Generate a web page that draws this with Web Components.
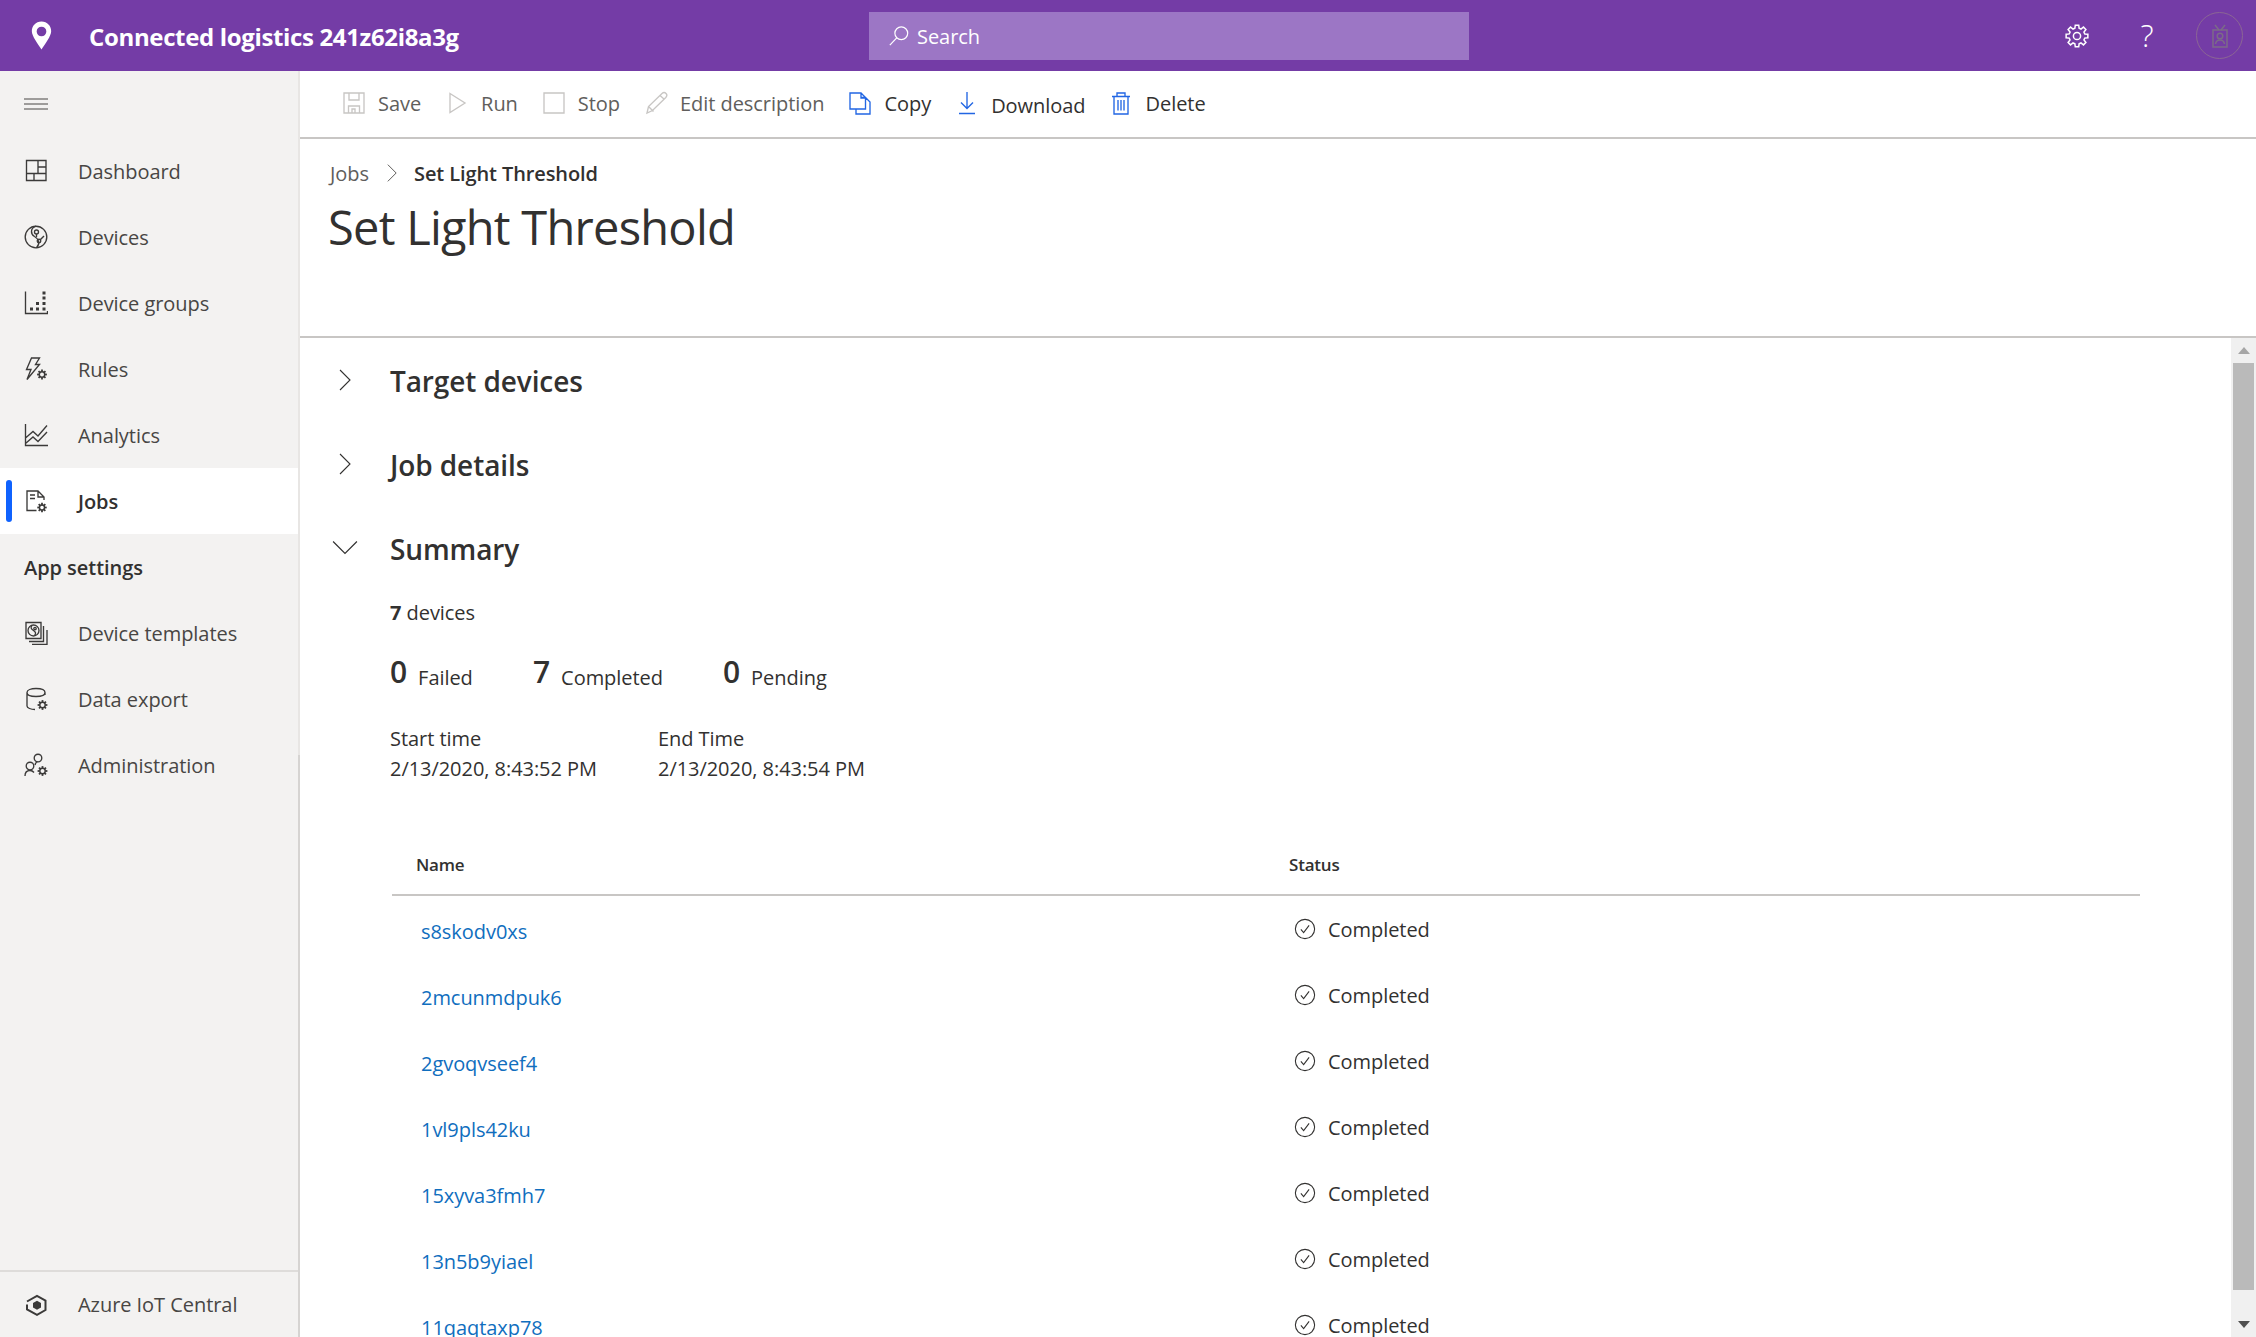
<!DOCTYPE html>
<html lang="en">
<head>
<meta charset="utf-8">
<title>Set Light Threshold</title>
<style>
    html, body { margin: 0; height: 100%; overflow: hidden; }
    body {
        font-family: "Open Sans", "Noto Sans", sans-serif;
        font-size: 20px;
        letter-spacing: -0.05px;
        color: #323130;
        background: #fff;
    }
</style>
</head>
<body>
<app-shell>
    <top-bar slot="top" title-text="Connected logistics 241z62i8a3g"></top-bar>
    <side-nav slot="side">
        <nav-item icon="dashboard">Dashboard</nav-item>
        <nav-item icon="devices">Devices</nav-item>
        <nav-item icon="groups">Device groups</nav-item>
        <nav-item icon="rules">Rules</nav-item>
        <nav-item icon="analytics">Analytics</nav-item>
        <nav-item icon="jobs" active>Jobs</nav-item>
        <nav-heading>App settings</nav-heading>
        <nav-item icon="templates">Device templates</nav-item>
        <nav-item icon="export">Data export</nav-item>
        <nav-item icon="admin">Administration</nav-item>
        <nav-item slot="footer" icon="azure">Azure IoT Central</nav-item>
    </side-nav>
    <command-bar slot="commands">
        <command-button icon="save" disabled>Save</command-button>
        <command-button icon="run" disabled>Run</command-button>
        <command-button icon="stop" disabled>Stop</command-button>
        <command-button icon="edit" disabled>Edit description</command-button>
        <command-button icon="copy">Copy</command-button>
        <command-button icon="download" drop>Download</command-button>
        <command-button icon="trash">Delete</command-button>
    </command-bar>
    <page-heading slot="heading" parent="Jobs" current="Set Light Threshold"></page-heading>
    <job-sections slot="content">
        <section-head>Target devices</section-head>
        <section-head>Job details</section-head>
        <section-head open>Summary</section-head>
        <job-summary></job-summary>
        <job-table>
            <job-row name="s8skodv0xs"></job-row>
            <job-row name="2mcunmdpuk6"></job-row>
            <job-row name="2gvoqvseef4"></job-row>
            <job-row name="1vl9pls42ku"></job-row>
            <job-row name="15xyva3fmh7"></job-row>
            <job-row name="13n5b9yiael"></job-row>
            <job-row name="11qaqtaxp78"></job-row>
        </job-table>
    </job-sections>
    <scroll-rail slot="rail"></scroll-rail>
</app-shell>

<script>
// small gear used by several of the nav icons
function gear(cx, cy, r) {
    var spokes = '';
    for (var i = 0; i < 8; i++) {
        var a = i * Math.PI / 4;
        spokes += `<line x1="${cx + Math.cos(a) * r}" y1="${cy + Math.sin(a) * r}" x2="${cx + Math.cos(a) * (r + 2.2)}" y2="${cy + Math.sin(a) * (r + 2.2)}" stroke-width="1.800"/>`;
    }
    return `<circle cx="${cx}" cy="${cy}" r="${r}" stroke-width="1.400"/>${spokes}`;
}

function gearOutline(cx, cy, outer, inner, teeth) {
    var d = '';
    var step = Math.PI * 2 / teeth;
    for (var i = 0; i < teeth; i++) {
        var a = i * step;
        var pts = [[a - step * 0.34, inner], [a - step * 0.2, outer], [a + step * 0.2, outer], [a + step * 0.34, inner]];
        pts.forEach((p, n) => {
            d += (i == 0 && n == 0 ? 'M' : 'L') + (cx + Math.cos(p[0]) * p[1]).toFixed(2) + ' ' + (cy + Math.sin(p[0]) * p[1]).toFixed(2);
        });
    }
    return d + 'Z';
}

const ICONS = {
    dashboard: '<path d="M2.500 1.500h19.500v20H2.500zM2.500 14.500h19.500M14 1.500V14.500M14 8h8M10 14.500V21.500"/>',
    devices: '<circle cx="12" cy="12" r="10.800"/><path d="M12 1.200C6 3.500 6.500 9 10.500 11.500C15 14 16.500 18.500 12.500 22.800"/><circle cx="12.500" cy="7" r="2"/><path d="M12.500 9v3"/><circle cx="15" cy="16" r="1.800"/><path d="M16.500 14.500l3.500-3.500"/>',
    groups: '<path d="M1.500 0.500V22.500H23.500V20"/><path d="M6 18h3M12 18h3M18.500 18h3M12 12.500h3M18.500 12.500h3M18.500 7h3M18.500 2h3" stroke-width="2.800"/>',
    rules: '<path d="M7.500 1H15.500L11.500 7.500H15.500L3 22.500L7 12.500H2.500z"/>' + gear(18, 17.500, 2.700),
    analytics: '<path d="M1.500 1V22.500H24M1.500 15L9 8.500l5 4.500L23 2.500M1.500 20.500L9 14l5 4.500L23 9"/>',
    jobs: '<path d="M12.500 21.500H3V2H14l6 6v3M14 2v6h6M6 6h5M6 9.500h5"/>' + gear(18, 18.500, 2.500),
    templates: '<path d="M2 1.500h15v16H2z"/><path d="M19.500 5v15.500H5M23 9v14.500H8"/><circle cx="9.500" cy="9.500" r="5.500"/><path d="M8 4.500c-2 2-.5 3.500 1.500 5s3 3 1 5"/><circle cx="11" cy="7.500" r="1.200"/>',
    export: '<path d="M21 8V5.500C21 3 17 1.500 12 1.500S3 3 3 5.500V19c0 2 4 3.500 8 3.500M3 5.500C3 8 7 9.500 12 9.500s9-1.500 9-4"/>' + gear(18.500, 18, 2.700),
    admin: '<circle cx="14" cy="5" r="3.800"/><circle cx="6" cy="13" r="3.800"/><path d="M1 23c0-3.500 2-5.500 5-5.500 2 0 3 .7 4 2M11 12c.5-2.500 1.500-3 2.500-3.500"/>' + gear(18.500, 18, 2.700),
    azure: '<path d="M3 8.500L13 2.800l8.500 4.700v9.500L13 21.800 3 16.500V11.500" stroke-width="2"/><path d="M13 7.800l4 2.200v4.500l-4 2.200-4-2.200V10z" fill="currentColor" stroke="none"/>',
    save: '<path d="M2 2h20v20H2zM7 2v7h10V2M6.500 22v-7h11v7M10 22v-4h3v4"/>',
    run: '<path d="M5 2.500L20 12L5 21.500z"/>',
    stop: '<path d="M2 2h20v20H2z"/>',
    edit: '<path d="M3 22l1.500-6.500L18 2.500c1.500-1.300 3-1 4 0s1 2.700-.2 4L8.500 19.500zM4.500 15.500l5 5M16 4.500l4.500 4"/>',
    copy: '<path d="M13 6.500h4.500L22 11v12H8V18M2 2h11l4.500 4.500V18H2zM13 2v5h4.500"/>',
    download: '<path d="M12 1v16M6 11.500l6 6 6-6M4 22.500h16"/>',
    trash: '<path d="M3 5.500h18M8 5.500V2h8v3.500M5 5.500V23h14V5.500M9 9v10.500M12 9v10.500M15 9v10.500"/>',
    pin: '<path d="M12 .5C7.200 .5 4 4.200 4 8.500c0 4 5 10.500 8 15 3-4.500 8-11 8-15C20 4.200 16.800 .5 12 .5zm0 4.200a4 4 0 1 1 0 8 4 4 0 0 1 0-8z" fill="currentColor" fill-rule="evenodd" stroke="none"/>',
    search: '<circle cx="14.500" cy="9" r="7"/><path d="M9.500 14L2 22"/>',
    cog: `<path d="${gearOutline(12, 12, 11, 8, 8)}"/><circle cx="12" cy="12" r="3.600"/>`,
    badge: '<rect x="5" y="6" width="14" height="17"/><path d="M7 1l4 5M17 1l-4 5"/><circle cx="12" cy="12" r="2.800"/><path d="M7.500 20c.5-3 2-4 4.500-4s4 1 4.500 4"/>',
    menu: '<path d="M0 7h24M0 12h24M0 17h24"/>',
    right: '<path d="M7 2l10 10L7 22"/>',
    down: '<path d="M1 6l11 11L23 6"/>',
    check: '<circle cx="12" cy="12" r="10.500"/><path d="M7.500 12.500l3 3.500 6-8"/>'
};

class UiIcon extends HTMLElement {
    connectedCallback() {
        var size = this.getAttribute('size') || 24;
        this.attachShadow({ mode: "open" });
        this.shadowRoot.innerHTML = `
        <style>
            :host { display: inline-flex; flex: none; width: ${size}px; height: ${size}px; }
            svg { width: 100%; height: 100%; display: block; fill: none; stroke: currentColor; stroke-width: ${this.getAttribute('weight') || 1.35}; }
        </style>
        <svg viewBox="0 0 24 24">${ICONS[this.getAttribute('name')]}</svg>`;
    }
}

class AppShell extends HTMLElement {
    constructor() {
        super();
        this.attachShadow({ mode: "open" });
        this.shadowRoot.innerHTML = `
        <style>
            :host { display: grid; height: 1337px; grid-template-columns: 300px 1fr; grid-template-rows: 71px 1fr; }
            #top { grid-column: 1 / 3; }
            #main { display: flex; flex-direction: column; min-width: 0; min-height: 0; }
            #body { flex: 1; display: flex; min-height: 0; overflow: hidden; }
            #content { flex: 1; min-width: 0; overflow: hidden; }
        </style>
        <div id="top"><slot name="top"></slot></div>
        <slot name="side"></slot>
        <div id="main">
            <slot name="commands"></slot>
            <slot name="heading"></slot>
            <div id="body">
                <div id="content"><slot name="content"></slot></div>
                <slot name="rail"></slot>
            </div>
        </div>`;
    }
}

class TopBar extends HTMLElement {
    connectedCallback() {
        this.attachShadow({ mode: "open" });
        this.shadowRoot.innerHTML = `
        <style>
            :host { display: grid; grid-template-columns: 869px 600px 1fr; align-items: center; height: 71px; background: #743ca6; color: #fff; }
            #brand { display: flex; align-items: center; padding-left: 27px; gap: 33px; }
            #brand span { font-size: 24px; font-weight: 700; letter-spacing: -0.35px; position: relative; top: 1px; }
            #search { height: 48px; background: #9c76c5; display: flex; align-items: center; padding-left: 19px; gap: 7px; color: #fff; font-size: 20px; }
            #search span { position: relative; top: 1px; }
            #tools { display: flex; align-items: center; justify-content: flex-end; padding-right: 13px; }
            #help { font-size: 31px; font-weight: 300; width: 30px; text-align: center; margin: 0 34px 0 43px; line-height: 1; }
            #avatar { width: 45px; height: 45px; border: 1px solid #8b6694; border-radius: 50%; display: flex; align-items: center; justify-content: center; color: #7c6a88; }
        </style>
        <div id="brand"><ui-icon name="pin" size="29"></ui-icon><span>${this.getAttribute('title-text')}</span></div>
        <div id="search"><ui-icon name="search" size="22" weight="1.3"></ui-icon><span>Search</span></div>
        <div id="tools">
            <ui-icon name="cog" size="24" weight="1.5"></ui-icon>
            <span id="help">?</span>
            <div id="avatar"><ui-icon name="badge" size="24" weight="1.5"></ui-icon></div>
        </div>`;
    }
}

class SideNav extends HTMLElement {
    constructor() {
        super();
        this.attachShadow({ mode: "open" });
        this.shadowRoot.innerHTML = `
        <style>
            :host { display: flex; flex-direction: column; background: #f3f2f1; border-right: 2px solid; border-image: linear-gradient(#e8e6e4 0 54%, #d6d4d2 54% 100%) 1; box-sizing: border-box; min-height: 0; }
            #burger { height: 65px; padding-bottom: 2px; display: flex; align-items: center; padding-left: 24px; color: #484644; }
            #list { flex: 1; }
            #foot { border-top: 2px solid #dedcda; height: 65px; display: flex; align-items: center; }
            #foot ::slotted(*) { flex: 1; }
        </style>
        <div id="burger"><ui-icon name="menu" size="24" weight="1"></ui-icon></div>
        <div id="list"><slot></slot></div>
        <div id="foot"><slot name="footer"></slot></div>`;
    }
}

class NavItem extends HTMLElement {
    connectedCallback() {
        var active = this.hasAttribute('active');
        this.attachShadow({ mode: "open" });
        this.shadowRoot.innerHTML = `
        <style>
            :host { display: flex; align-items: center; height: 66px; position: relative; color: #484644; ${active ? 'background: #fff; color: #323130; font-weight: 600;' : ''} }
            #mark { position: absolute; left: 6px; top: 12px; bottom: 12px; width: 6px; border-radius: 3px; background: #0f62fe; }
            ui-icon { margin-left: 24px; margin-right: 30px; color: #3b3a39; }
        </style>
        ${active ? '<div id="mark"></div>' : ''}
        <ui-icon name="${this.getAttribute('icon')}"></ui-icon><slot></slot>`;
    }
}

class NavHeading extends HTMLElement {
    constructor() {
        super();
        this.attachShadow({ mode: "open" });
        this.shadowRoot.innerHTML = `
        <style>
            :host { display: flex; align-items: center; height: 66px; padding-left: 24px; font-weight: 600; }
        </style>
        <slot></slot>`;
    }
}

class CommandBar extends HTMLElement {
    constructor() {
        super();
        this.attachShadow({ mode: "open" });
        this.shadowRoot.innerHTML = `
        <style>
            :host { display: flex; align-items: center; height: 68px; box-sizing: border-box; border-bottom: 2px solid #c8c6c4; padding-left: 42px; gap: 24px; }
        </style>
        <slot></slot>`;
    }
}

class CommandButton extends HTMLElement {
    connectedCallback() {
        var off = this.hasAttribute('disabled');
        this.attachShadow({ mode: "open" });
        this.shadowRoot.innerHTML = `
        <style>
            :host { display: inline-flex; align-items: center; gap: 12px; color: ${off ? '#605e5c' : '#323130'}; }
            ui-icon { color: ${off ? '#c8c6c4' : '#2266e3'}; position: relative; top: -1px; }
            span { position: relative; top: ${this.hasAttribute('drop') ? 1 : -1}px; }
        </style>
        <ui-icon name="${this.getAttribute('icon')}"></ui-icon><span><slot></slot></span>`;
    }
}

class PageHeading extends HTMLElement {
    connectedCallback() {
        this.attachShadow({ mode: "open" });
        this.shadowRoot.innerHTML = `
        <style>
            :host { display: block; height: 199px; box-sizing: border-box; border-bottom: 2px solid #c8c6c4; padding: 18px 0 0 30px; }
            #crumbs { display: flex; align-items: center; height: 32px; }
            #crumbs span { color: #605e5c; }
            #crumbs b { font-weight: 600; letter-spacing: -0.1px; }
            ui-icon { margin: 0 12px 0 13px; color: #605e5c; }
            h1 { margin: 7px 0 0 -2px; font-size: 47px; font-weight: 400; line-height: 62px; letter-spacing: -0.75px; color: #323130; }
        </style>
        <div id="crumbs"><span>${this.getAttribute('parent')}</span><ui-icon name="right" size="20" weight="1.2"></ui-icon><b>${this.getAttribute('current')}</b></div>
        <h1>${this.getAttribute('current')}</h1>`;
    }
}

class JobSections extends HTMLElement {
    constructor() {
        super();
        this.attachShadow({ mode: "open" });
        this.shadowRoot.innerHTML = `
        <style>
            :host { display: block; }
        </style>
        <slot></slot>`;
    }
}

class SectionHead extends HTMLElement {
    connectedCallback() {
        this.attachShadow({ mode: "open" });
        this.shadowRoot.innerHTML = `
        <style>
            :host { display: flex; align-items: center; height: 84px; font-size: 28px; font-weight: 600; letter-spacing: -0.1px; }
            #chev { width: 90px; display: flex; justify-content: center; padding-left: 0; color: #323130; }
            span { position: relative; top: 1px; }
        </style>
        <div id="chev"><ui-icon name="${this.hasAttribute('open') ? 'down' : 'right'}" size="${this.hasAttribute('open') ? 26 : 24}" weight="1.1"></ui-icon></div>
        <span><slot></slot></span>`;
    }
}

class StatCount extends HTMLElement {
    connectedCallback() {
        this.attachShadow({ mode: "open" });
        this.shadowRoot.innerHTML = `
        <style>
            :host { display: inline-flex; align-items: baseline; gap: 11px; }
            b { font-size: 30px; font-weight: 600; position: relative; top: -2px; }
        </style>
        <b>${this.getAttribute('value')}</b><span><slot></slot></span>`;
    }
}

class JobSummary extends HTMLElement {
    constructor() {
        super();
        this.attachShadow({ mode: "open" });
        this.shadowRoot.innerHTML = `
        <style>
            :host { display: block; padding: 9px 0 0 90px; }
            #count { line-height: 28px; }
            #count b { font-weight: 700; }
            #stats { display: flex; margin-top: 24px; height: 44px; align-items: center; }
            stat-count:nth-child(1) { width: 143px; }
            stat-count:nth-child(2) { width: 190px; }
            #times { display: flex; margin-top: 29px; line-height: 30px; }
            #times div { width: 268px; }
        </style>
        <div id="count"><b>7</b> devices</div>
        <div id="stats">
            <stat-count value="0">Failed</stat-count>
            <stat-count value="7">Completed</stat-count>
            <stat-count value="0">Pending</stat-count>
        </div>
        <div id="times">
            <div>Start time<br>2/13/2020, 8:43:52 PM</div>
            <div>End Time<br>2/13/2020, 8:43:54 PM</div>
        </div>`;
    }
}

class JobTable extends HTMLElement {
    constructor() {
        super();
        this.attachShadow({ mode: "open" });
        this.shadowRoot.innerHTML = `
        <style>
            :host { display: block; margin: 45px 91px 0 92px; }
            #head { display: grid; grid-template-columns: 873px 1fr; align-items: center; height: 67px; box-sizing: border-box; border-bottom: 2px solid #c8c6c4; padding: 6px 0 0 24px; font-size: 17px; font-weight: 600; letter-spacing: -0.2px; }
        </style>
        <div id="head"><span>Name</span><span>Status</span></div>
        <slot></slot>`;
    }
}

class JobRow extends HTMLElement {
    connectedCallback() {
        this.attachShadow({ mode: "open" });
        this.shadowRoot.innerHTML = `
        <style>
            :host { display: grid; grid-template-columns: 873px 1fr; align-items: center; height: 66px; padding-left: 29px; }
            a { color: #106ebe; text-decoration: none; position: relative; top: 2px; }
            #state { display: flex; align-items: center; gap: 12px; }
        </style>
        <a href="#">${this.getAttribute('name')}</a>
        <div id="state"><ui-icon name="check" size="22" weight="1.2"></ui-icon><span>Completed</span></div>`;
    }
}

class ScrollRail extends HTMLElement {
    constructor() {
        super();
        this.attachShadow({ mode: "open" });
        this.shadowRoot.innerHTML = `
        <style>
            :host { display: flex; flex-direction: column; align-items: center; width: 25px; flex: none; background: #f0f0f0; height: 100%; }
            .end { height: 25px; display: flex; align-items: center; justify-content: center; flex: none; }
            .tri { width: 0; height: 0; border-left: 6px solid transparent; border-right: 6px solid transparent; }
            #up { border-bottom: 7px solid #a6a6a6; }
            #dn { border-top: 7px solid #505050; }
            #thumb { width: 21px; height: 927px; background: #bababa; flex: none; }
            #gap { flex: 1; }
        </style>
        <div class="end"><div class="tri" id="up"></div></div>
        <div id="thumb"></div>
        <div id="gap"></div>
        <div class="end"><div class="tri" id="dn"></div></div>`;
    }
}

customElements.define("ui-icon", UiIcon);
customElements.define("app-shell", AppShell);
customElements.define("top-bar", TopBar);
customElements.define("side-nav", SideNav);
customElements.define("nav-item", NavItem);
customElements.define("nav-heading", NavHeading);
customElements.define("command-bar", CommandBar);
customElements.define("command-button", CommandButton);
customElements.define("page-heading", PageHeading);
customElements.define("job-sections", JobSections);
customElements.define("section-head", SectionHead);
customElements.define("stat-count", StatCount);
customElements.define("job-summary", JobSummary);
customElements.define("job-table", JobTable);
customElements.define("job-row", JobRow);
customElements.define("scroll-rail", ScrollRail);
</script>
</body>
</html>
